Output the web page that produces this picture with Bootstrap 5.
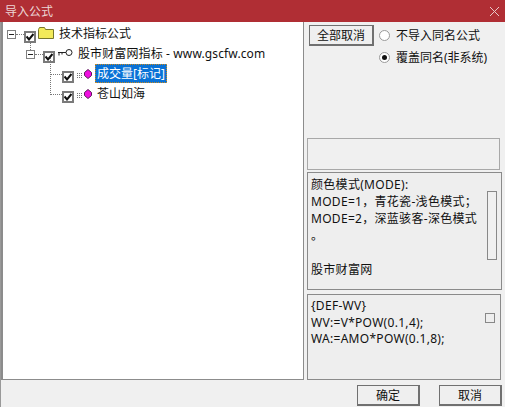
<!DOCTYPE html>
<html lang="zh"><head><meta charset="utf-8">
<link href="https://cdn.jsdelivr.net/npm/bootstrap@5.3.0/dist/css/bootstrap.min.css" rel="stylesheet">
<style>
html,body{margin:0;height:407px;overflow:hidden;background:#f0f0f0}
body{font-family:"Noto Sans","Noto Sans CJK SC",sans-serif;font-size:12px;line-height:17px;color:#111}
.dlg{width:505px;height:407px}
.ttl{height:22px;background:#b02e34;color:#ecd6d6;padding-left:5px;line-height:21px}
.xbtn{margin-right:6px}
.mid{height:358px;border-left:1px solid #999}
.treebox{width:303px;background:#fff;border:1px solid #8c8c8c;border-left-width:2px;border-top:0;padding-top:5px}
.trow{height:20px}
.exp{width:9px;height:9px;border:1px solid #808080;position:relative;background:#fff;flex:none;margin-bottom:5px}
.exp::after{content:"";position:absolute;left:1px;right:1px;top:3px;height:1px;background:#222}
.dh{border-top:1px dotted #777;height:0;flex:none;width:8px;margin-bottom:5px}
.cbx{width:12px;height:12px;border:2px solid #7a7a7a;background:#fff;flex:none;display:flex;align-items:center;justify-content:center}
.l1{padding-left:4px}.l2{padding-left:23px}.l3{padding-left:59px;position:relative}
.vl{position:absolute;left:47px;border-left:1px dotted #777;width:12px;border-bottom:1px dotted #777}
.vs{top:-9px;height:17px}.vt{top:-13px;height:21px}
.v2{position:absolute;left:27px;top:20px;height:8px;border-left:1px dotted #777}
.rel{position:relative}
.lbl{margin-left:5px;margin-bottom:7px}
.lbl-wide{letter-spacing:.12px}
.ic-f{margin-left:2px;margin-bottom:9px}
.ic-k{margin-left:3px;margin-bottom:9px}
.ic-m{margin-left:3px;margin-bottom:6px}
.sel{background:#0a72d6;color:#fff;outline:1px dotted #c98a20;outline-offset:-1px;padding:0 2px;margin-left:3px;margin-bottom:7px;line-height:19px;height:19px}
.side{width:198px;margin-left:3px}
.w-btn{background:#efefef;border:1px solid #707070;border-width:1px 2px 2px 1px;border-radius:0;color:#111;font-size:12px;line-height:17px;padding:0;height:21px;display:block}
.w-all{width:65px;margin:3px 0 0 2px}
.w-ok{width:63px}
.rdo{width:11px;height:11px;border:1px solid #9a9a9a;border-radius:50%;background:#fff;display:inline-flex;align-items:center;justify-content:center;flex:none;margin-right:6px}
.rdo i{width:5px;height:5px;background:#111;border-radius:50%;display:block}
.opts{margin-left:5px;margin-top:3px;row-gap:2px}
.optrow{height:20px}
.top-h{height:116px}
.g1{height:32px;border:1px solid #a8a8a8;width:193px;background:#f0f0f0}
.txt{letter-spacing:.3px;padding-left:3px;padding-right:4px;position:relative;background:#eee;border:1px solid #8a8a8a}
.g2{height:118px;width:195px;margin-top:2px;padding-top:3px;padding-right:20px;line-height:17px}
.g3{height:86px;width:194px;margin-top:4px;padding-top:3px;line-height:16.600px}
.sb{position:absolute;right:4px;top:18px;width:10px;height:69px;border:1px solid #888;background:#f0f0f0}
.sq{position:absolute;right:5px;top:18px;width:10px;height:10px;border:1px solid #888}
.foot{height:27px;padding:5px 3px 1px 0;gap:19px;border-left:1px solid #999}
</style></head><body>
<div class="dlg d-flex flex-column">
 <div class="ttl d-flex justify-content-between align-items-center"><span>导入公式</span>
  <svg class="xbtn" width="9" height="9" viewBox="0 0 9 9"><path d="M0 0l9 9M9 0L0 9" stroke="#e8c8c8" stroke-width="1" fill="none"/></svg></div>
 <div class="mid d-flex">
  <div class="treebox rel">
   <div class="trow l1 d-flex align-items-center"><span class="exp"></span><span class="dh"></span>
    <span class="cbx"><svg width="8" height="8" viewBox="0 0 8 8"><path d="M.5 3.500l2.500 3L7.500 1" stroke="#111" stroke-width="2" fill="none"/></svg></span>
    <svg class="ic-f" width="16" height="12" viewBox="0 0 16 12"><path d="M.5 2.500l1-2h5l1 2h8v9H.5z" fill="#f2ea5a" stroke="#77772c"/></svg>
    <span class="lbl">技术指标公式</span></div>
   <span class="v2"></span>
   <div class="trow l2 d-flex align-items-center"><span class="exp"></span><span class="dh"></span>
    <span class="cbx"><svg width="8" height="8" viewBox="0 0 8 8"><path d="M.5 3.500l2.500 3L7.500 1" stroke="#111" stroke-width="2" fill="none"/></svg></span>
    <svg class="ic-k" width="15" height="8" viewBox="0 0 15 8"><circle cx="11" cy="3.500" r="3" fill="none" stroke="#222"/><path d="M8 3.500H0M1 3.500v3M4 3.500v2" stroke="#222" fill="none"/></svg>
    <span class="lbl lbl-wide">股市财富网指标 - www.gscfw.com</span></div>
   <div class="trow l3 d-flex align-items-center"><span class="vl vs"></span>
    <span class="cbx"><svg width="8" height="8" viewBox="0 0 8 8"><path d="M.5 3.500l2.500 3L7.500 1" stroke="#111" stroke-width="2" fill="none"/></svg></span>
    <svg class="ic-m" width="15" height="10" viewBox="0 0 15 10"><path d="M0 4.500h6M0 6.500h6M0 8.500h6" stroke="#777" stroke-dasharray="1 1"/><path d="M11 .5l3.500 3v3L11 9.500 7.500 6.500v-3z" fill="#f010e0" stroke="#5a1a5a"/></svg>
    <span class="sel">成交量[标记]</span></div>
   <div class="trow l3 d-flex align-items-center"><span class="vl vt"></span>
    <span class="cbx"><svg width="8" height="8" viewBox="0 0 8 8"><path d="M.5 3.500l2.500 3L7.500 1" stroke="#111" stroke-width="2" fill="none"/></svg></span>
    <svg class="ic-m" width="15" height="10" viewBox="0 0 15 10"><path d="M0 4.500h6M0 6.500h6M0 8.500h6" stroke="#777" stroke-dasharray="1 1"/><path d="M11 .5l3.500 3v3L11 9.500 7.500 6.500v-3z" fill="#f010e0" stroke="#5a1a5a"/></svg>
    <span class="lbl">苍山如海</span></div>
  </div>
  <div class="side d-flex flex-column">
   <div class="top-h d-flex align-items-start">
    <button class="w-btn w-all" type="button">全部取消</button>
    <div class="opts d-flex flex-column">
     <div class="optrow d-flex align-items-center"><span class="rdo"></span>不导入同名公式</div>
     <div class="optrow d-flex align-items-center"><span class="rdo"><i></i></span>覆盖同名(非系统)</div>
    </div>
   </div>
   <div class="g1"></div>
   <div class="txt g2">颜色模式(MODE):<br>MODE=1，青花瓷-浅色模式；<br>MODE=2，深蓝骇客-深色模式<br>。<br><br>股市财富网<span class="sb"></span></div>
   <div class="txt g3">{DEF-WV}<br>WV:=V*POW(0.1,4);<br>WA:=AMO*POW(0.1,8);<span class="sq"></span></div>
  </div>
 </div>
 <div class="foot d-flex justify-content-end">
  <button class="w-btn w-ok" type="button">确定</button>
  <button class="w-btn w-ok" type="button">取消</button>
 </div>
</div>
</body></html>
